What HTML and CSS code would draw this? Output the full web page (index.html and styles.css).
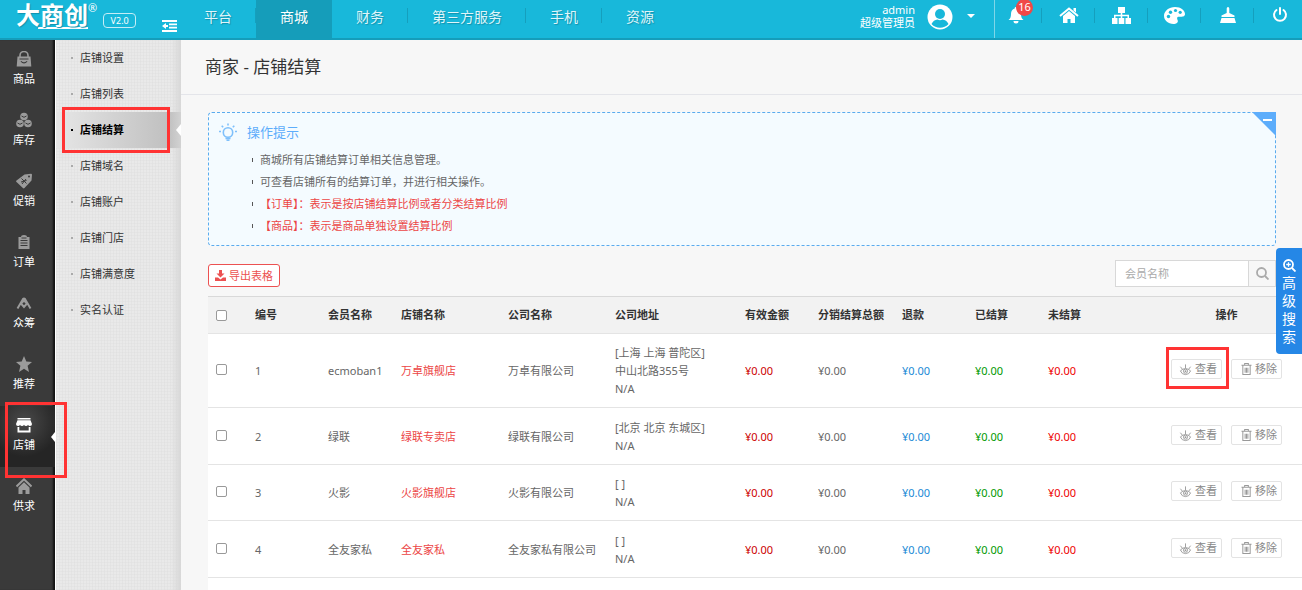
FILE: index.html
```html
<!DOCTYPE html>
<html lang="zh-CN">
<head>
<meta charset="utf-8">
<title>商家 - 店铺结算</title>
<link rel="stylesheet" href="styles.css">
</head>
<body>
<svg class="defs" aria-hidden="true">
  <symbol id="i-eye" viewBox="0 0 14 14"><g fill="none" stroke="currentColor"><path d="M1.500 8.500Q7 3.500 12.500 8.500Q11 12.500 7 12.500Q3 12.500 1.500 8.500Z"/><circle cx="7" cy="8.800" r="2.200"/><path d="M7 1.500V5.500M1.500 4L3.500 6.500M12.500 4L10.500 6.500"/></g><circle cx="7" cy="8.800" r="1" fill="currentColor"/></symbol>
  <symbol id="i-trash" viewBox="0 0 12 13"><path d="M4 2V.6h4V2M.5 2.500h11M2 3v9.400h8V3M4.500 5v5.500M6 5v5.500M7.500 5v5.500" fill="none" stroke="currentColor" stroke-width="1.100"/></symbol>
</svg>
<header class="top">
  <div class="brand">
    <span class="logo">大商创</span><span class="reg">®</span>
    <span class="ver">V2.0</span>
    <button class="fold" aria-label="折叠菜单"><svg width="15" height="12" viewBox="0 0 15 12" fill="#fff"><path d="M0 0h15v2H0zM7 3.500h8v1.800H7zM7 6.700h8v1.800H7zM0 10h15v2H0zM0 6l4-3v2h2v2H4v2z"/></svg></button>
  </div>
  <nav class="tabs">
    <a href="#">平台</a><a href="#" class="on">商城</a><a href="#">财务</a><a href="#">第三方服务</a><a href="#">手机</a><a href="#">资源</a>
  </nav>
  <div class="user">
    <div class="who"><span>admin</span><span>超级管理员</span></div>
    <svg width="26" height="26" viewBox="0 0 26 26"><circle cx="13" cy="13" r="12.500" fill="#fff"/><circle cx="13" cy="10" r="5" fill="#18b8da"/><path d="M4.500 20Q6.500 15.800 10.500 15.500Q13 17 15.500 15.500Q19.500 15.800 21.500 20Q18 23.800 13 23.800Q8 23.800 4.500 20Z" fill="#18b8da"/></svg>
    <svg class="caret" width="8" height="4" viewBox="0 0 8 4"><path d="M0 0h8L4 4z" fill="#fff"/></svg>
  </div>
  <div class="tools">
    <button aria-label="消息"><svg width="16" height="18" viewBox="0 0 16 18" fill="#fff"><path d="M8 1a1.300 1.300 0 0 1 1.300 1.500Q13 3.600 13 8q0 4.500 2.500 6H.5Q3 12.500 3 8q0-4.400 3.700-5.500A1.300 1.300 0 0 1 8 1zM5.500 15h5a2.500 2.500 0 0 1-5 0z"/></svg><span class="badge">16</span></button>
    <button aria-label="首页"><svg width="20" height="16" viewBox="0 0 20 16"><path d="M1 9l9-7.500L19 9" fill="none" stroke="#fff" stroke-width="2"/><path d="M14.500 1H17v4.500l-2.500-2zM4 9l6-5 6 5v7h-4.500v-4h-3v4H4z" fill="#fff"/></svg></button>
    <button aria-label="站点地图"><svg width="19" height="17" viewBox="0 0 19 17" fill="#fff"><path d="M6 0h7v6H6zM0 11h5.500v6H0zM6.700 11h5.600v6H6.700zM13.500 11H19v6h-5.500zM8.700 6h1.600v5H8.700zM2 7.700h15V11h-1.500V9.200h-12V11H2z"/></svg></button>
    <button aria-label="主题"><svg width="21" height="17" viewBox="0 0 21 17"><path d="M11 0c6 0 10 3.500 10 7 0 3-3.500 2.800-5.800 2.800-3 0-2 2.200-1.500 3.500C14.500 16 12 17 9.500 17 4 17 0 13.300 0 8.800 0 4 5 0 11 0z" fill="#fff"/><g fill="#18b8da"><circle cx="4.500" cy="9.500" r="1.700"/><circle cx="6.500" cy="5.300" r="1.700"/><circle cx="11.500" cy="3.500" r="1.600"/><circle cx="16.200" cy="5.300" r="1.600"/></g></svg></button>
    <button aria-label="清理缓存"><svg width="16" height="17" viewBox="0 0 16 17" fill="#fff"><path d="M8 0q1.300 0 1.300 1.500V6L14.500 8.500V10h-13V8.500L6.700 6V1.500Q6.700 0 8 0zM1.500 11h13L16 16H0z"/></svg></button>
    <button aria-label="退出"><svg width="16" height="16" viewBox="0 0 16 16" fill="none" stroke="#fff" stroke-width="2" stroke-linecap="round"><path d="M8 1v6M4.500 3a6 6 0 1 0 7 0"/></svg></button>
  </div>
</header>
<div class="frame">
  <nav class="side">
    <a href="#"><svg viewBox="0 0 16 16" fill="#9b9b9b"><path d="M4 6V4.500a4 4 0 0 1 8 0V6" fill="none" stroke="#9b9b9b" stroke-width="1.600"/><path fill-rule="evenodd" d="M1.500 5.500h13l.8 10H.7zM3.500 7.500v1h9v-1zM4.500 10.500q3.500 4 7 0l-.8-.5q-2.700 2.500-5.400 0z"/></svg><span>商品</span></a>
    <a href="#"><svg viewBox="0 0 16 16"><g fill="#9b9b9b"><circle cx="8" cy="4.500" r="3.800"/><circle cx="4" cy="11.500" r="3.800"/><circle cx="12" cy="11.500" r="3.800"/></g><g fill="none" stroke="#3a3a3a"><path d="M5.500 4L8 5.300 10.500 4M1.500 11L4 12.300l2.500-1.300M9.500 11l2.500 1.300 2.500-1.300"/></g></svg><span>库存</span></a>
    <a href="#"><svg viewBox="0 0 16 16"><path d="M8.500 1.500L15 .8q1 0 1 1L15.500 7.500 8.500 15q-.8.8-1.600 0L.5 9q-.8-.8 0-1.600z" fill="#9b9b9b"/><circle cx="13" cy="3.500" r="1" fill="#3a3a3a"/><path d="M5.500 5.500l5 5M10 6l-4 5M5 9l5.500-1.500" stroke="#3a3a3a"/></svg><span>促销</span></a>
    <a href="#"><svg viewBox="0 0 16 16"><path d="M2.500 3H5q0-2 3-2t3 2h2.500v12h-11z" fill="#9b9b9b"/><path d="M4.500 6.500h7M4.500 9h7M4.500 11.500h7M5.500 4h5" stroke="#3a3a3a"/></svg><span>订单</span></a>
    <a href="#"><svg viewBox="0 0 16 16"><path d="M1.500 13.500L7 4q1-1.200 2 0l5.500 9.500M5 8.500l3 3.500 3-3.500-3-3z" fill="none" stroke="#9b9b9b" stroke-width="2"/></svg><span>众筹</span></a>
    <a href="#"><svg viewBox="0 0 16 16"><path d="M8 0l2.300 5.600 5.700.4-4.400 3.800L13 16l-5-3.300L3 16l1.400-6.200L0 6l5.700-.4z" fill="#9b9b9b"/></svg><span>推荐</span></a>
    <a href="#" class="on"><svg viewBox="0 0 16 16" fill="#fff"><path d="M1.500 1h13v1.500h-13zM1.500 3.300h13L16 7q0 2-2 2-1.500 0-2-1.200Q11.500 9 10 9 8.600 9 8 7.800 7.400 9 6 9 4.500 9 4 7.800 3.500 9 2 9 0 9 0 7zM1.500 10h1.800v3.500h9.400V10h1.800v5.500h-13z"/></svg><span>店铺</span><i class="mark mark-side"></i></a>
    <a href="#"><svg viewBox="0 0 16 16"><path d="M.5 8.500L8 1.300l7.500 7.200" fill="none" stroke="#9b9b9b" stroke-width="2"/><path d="M2.500 9.500L8 4.200l5.500 5.300V16h-4v-4h-3v4h-4z" fill="#9b9b9b"/></svg><span>供求</span></a>
  </nav>
  <nav class="sub">
    <a href="#">店铺设置</a>
    <a href="#">店铺列表</a>
    <a href="#" class="on">店铺结算<i class="mark mark-sub"></i></a>
    <a href="#">店铺域名</a>
    <a href="#">店铺账户</a>
    <a href="#">店铺门店</a>
    <a href="#">店铺满意度</a>
    <a href="#">实名认证</a>
  </nav>
  <main class="main">
    <h1>商家 - 店铺结算</h1>
    <div class="content">
      <section class="tips">
        <h2><svg width="18" height="18" viewBox="0 0 18 18" fill="none" stroke="#7fc0fb" stroke-width="1.600"><circle cx="9" cy="9.500" r="4.700"/><path d="M6.500 15.500h5M7.500 17.300h3M9 .5v2M2.700 2.700l1.500 1.500M15.300 2.700l-1.500 1.500M0 8.500h2M16 8.500h2"/></svg>操作提示</h2>
        <ul>
          <li>商城所有店铺结算订单相关信息管理。</li>
          <li>可查看店铺所有的结算订单，并进行相关操作。</li>
          <li class="red">【订单】：表示是按店铺结算比例或者分类结算比例</li>
          <li class="red">【商品】：表示是商品单独设置结算比例</li>
        </ul>
        <button class="collapse" aria-label="收起"></button>
      </section>
      <div class="bar">
        <button class="export"><svg width="11" height="11" viewBox="0 0 11 11" fill="#ec5151"><path d="M4 0h3v3.500h2.500L5.500 7.500 1.500 3.500H4zM0 7.500h3L5.500 9.500 8 7.500h3V11H0z"/></svg>导出表格</button>
        <form class="search">
          <input type="text" placeholder="会员名称" aria-label="会员名称">
          <button type="button" aria-label="搜索"><svg width="13" height="13" viewBox="0 0 13 13" fill="none" stroke="#aaa" stroke-width="1.800"><circle cx="5.500" cy="5.500" r="4.500"/><path d="M9 9l3.500 3.500"/></svg></button>
        </form>
      </div>
      <div class="list">
        <table>
          <colgroup><col class="c-check"><col class="c-s"><col class="c-s"><col class="c-l"><col class="c-l"><col class="c-addr"><col class="c-s"><col class="c-m"><col class="c-s"><col class="c-s"><col class="c-l"><col></colgroup>
          <thead><tr><th><input type="checkbox" aria-label="全选"></th><th>编号</th><th>会员名称</th><th>店铺名称</th><th>公司名称</th><th>公司地址</th><th>有效金额</th><th>分销结算总额</th><th>退款</th><th>已结算</th><th>未结算</th><th class="ops">操作</th></tr></thead>
          <tbody>
            <tr><td class="pick"><input type="checkbox" aria-label="选择 1"></td><td>1</td><td>ecmoban1</td><td class="red">万卓旗舰店</td><td>万卓有限公司</td><td>[上海 上海 普陀区]<br>中山北路355号<br>N/A</td><td class="crimson">¥0.00</td><td>¥0.00</td><td class="blue">¥0.00</td><td class="green">¥0.00</td><td class="pure">¥0.00</td><td class="ops"><a href="#"><svg width="13" height="13"><use href="#i-eye"/></svg>查看<i class="mark mark-btn"></i></a><a href="#"><svg width="11" height="12"><use href="#i-trash"/></svg>移除</a></td></tr>
            <tr><td class="pick"><input type="checkbox" aria-label="选择 2"></td><td>2</td><td>绿联</td><td class="red">绿联专卖店</td><td>绿联有限公司</td><td>[北京 北京 东城区]<br>N/A</td><td class="crimson">¥0.00</td><td>¥0.00</td><td class="blue">¥0.00</td><td class="green">¥0.00</td><td class="pure">¥0.00</td><td class="ops"><a href="#"><svg width="13" height="13"><use href="#i-eye"/></svg>查看</a><a href="#"><svg width="11" height="12"><use href="#i-trash"/></svg>移除</a></td></tr>
            <tr><td class="pick"><input type="checkbox" aria-label="选择 3"></td><td>3</td><td>火影</td><td class="red">火影旗舰店</td><td>火影有限公司</td><td>[ ]<br>N/A</td><td class="crimson">¥0.00</td><td>¥0.00</td><td class="blue">¥0.00</td><td class="green">¥0.00</td><td class="pure">¥0.00</td><td class="ops"><a href="#"><svg width="13" height="13"><use href="#i-eye"/></svg>查看</a><a href="#"><svg width="11" height="12"><use href="#i-trash"/></svg>移除</a></td></tr>
            <tr><td class="pick"><input type="checkbox" aria-label="选择 4"></td><td>4</td><td>全友家私</td><td class="red">全友家私</td><td>全友家私有限公司</td><td>[ ]<br>N/A</td><td class="crimson">¥0.00</td><td>¥0.00</td><td class="blue">¥0.00</td><td class="green">¥0.00</td><td class="pure">¥0.00</td><td class="ops"><a href="#"><svg width="13" height="13"><use href="#i-eye"/></svg>查看</a><a href="#"><svg width="11" height="12"><use href="#i-trash"/></svg>移除</a></td></tr>
          </tbody>
        </table>
      </div>
    </div>
  </main>
</div>
<button class="advanced"><svg width="13" height="13" viewBox="0 0 13 13" fill="none" stroke="#fff" stroke-width="1.800"><circle cx="5.500" cy="5.500" r="4.500"/><path d="M9 9l3.500 3.500"/><path d="M3.200 5.500h4.600M5.500 3.200v4.600" stroke-width="1.300"/></svg><span>高</span><span>级</span><span>搜</span><span>索</span></button>
</body>
</html>
```

FILE: styles.css
```css
* { box-sizing: border-box; }
body {
  margin: 0;
  min-height: 100vh;
  display: flex;
  flex-direction: column;
  overflow-x: hidden;
  font: 11px/18px "Noto Sans", "Noto Sans CJK SC", sans-serif;
  color: #666;
  background: #f7f7f7;
}
a { color: inherit; text-decoration: none; }
button { margin: 0; padding: 0; border: 0; background: none; font: inherit; color: inherit; cursor: pointer; }
svg { display: block; flex: none; }
ul, h1, h2 { margin: 0; padding: 0; font-weight: 400; }
.defs { position: absolute; width: 0; height: 0; }

.top { height: 40px; display: flex; background: #18b8da; border-bottom: 2px solid #159dba; color: #fff; }
.brand { width: 180px; display: flex; align-items: flex-start; padding-left: 16px; }
.logo {
  font-size: 24px; line-height: 26px; font-weight: 700; height: 29px; padding-top: 2px;
  background: linear-gradient(#fff, #fff) right bottom / 50px 2px no-repeat;
  text-shadow: 1px 1px 1px #1292ad;
}
.reg { font-size: 11px; line-height: 16px; }
.ver { font-size: 9px; line-height: 13px; width: 33px; text-align: center; border: 1px solid #c5edf6; border-radius: 4px; margin: 13px 0 0 6px; }
.fold { margin: 20px 0 0 auto; padding-right: 3px; }
.tabs { display: flex; font-size: 14px; line-height: 34px; text-shadow: 1px 1px 1px #1292ad; }
.tabs a {
  padding: 0 24px; color: #dff5fa;
  background: linear-gradient(#159fbd, #159fbd) right 8px / 1px 15px no-repeat;
}
.tabs a:last-child { background: none; }
.tabs .on { background: #159dba; color: #fff; }
.user { margin-left: auto; display: flex; padding-right: 19px; border-right: 1px solid #7fd6e8; }
.who { display: flex; flex-direction: column; text-align: right; line-height: 13px; padding-top: 3px; margin-right: 12px; }
.user > svg { margin-top: 4px; }
.user .caret { margin: 14px 0 0 14px; }
.tools { display: grid; grid-template-columns: 47px repeat(4, 53px) 48px; }
.tools button {
  position: relative; display: flex; justify-content: center; align-items: center; height: 30px;
  background: linear-gradient(#159fbd, #159fbd) right 8px / 1px 15px no-repeat;
}
.tools button:first-child { padding-right: 5px; }
.tools button:last-child { padding-left: 4px; background: none; }
.badge { position: absolute; left: 21px; top: -1px; width: 17px; height: 17px; border-radius: 9px; background: #f04848; line-height: 16px; text-align: center; }

.frame { flex: 1; display: flex; }
.side { width: 56px; flex: none; background: #3a3a3a; border-right: 1px solid #fff; box-shadow: inset -3px 0 2px -1px #111; color: #fff; }
.side a { position: relative; height: 61px; display: flex; flex-direction: column; align-items: center; gap: 2px; padding: 11px 7px 0 0; }
.side svg { width: 16px; height: 16px; }
.side span { line-height: 20px; }
.side .on { background: radial-gradient(circle at 24px 16px, #4a4a4a, #252525 35px); }
.side .on::after { content: ""; position: absolute; right: 0; top: 26px; border: 5px solid transparent; border-left: 0; border-right: 4px solid #fff; }
.sub {
  width: 125px; flex: none; color: #333;
  background:
    linear-gradient(90deg, transparent 115px, #d8d8d8),
    repeating-linear-gradient(90deg, #dcdcdc66 0 1px, transparent 1px 3px),
    repeating-linear-gradient(#dedede66 0 1px, transparent 1px 3px), #e9e9e9;
}
.sub a { position: relative; display: flex; align-items: center; height: 36px; padding-left: 15px; }
.sub a::before { content: ""; width: 2px; height: 2px; background: #aaa; margin-right: 7px; }
.sub .on { color: #000; font-weight: 700; background: linear-gradient(90deg, #e6e6e6, #c0c0c0 90%, #d2d2d2); }
.sub .on::before { background: #000; }
.sub .on::after { content: ""; position: absolute; right: 0; top: 12px; border: 6px solid transparent; border-left: 0; border-right: 5px solid #fff; }
.mark { position: absolute; z-index: 3; border: 3px solid #f33; pointer-events: none; }
.mark-side { left: 5px; top: -4px; width: 62px; height: 76px; }
.mark-sub { left: 6px; top: -5px; width: 108px; height: 46px; }
.mark-btn { left: -6px; top: -13px; width: 63px; height: 42px; }

.main { flex: 1; min-width: 0; display: flex; flex-direction: column; }
h1 { font-size: 17px; line-height: 54px; color: #333; padding-left: 24px; border-bottom: 1px solid #e4e5ea; }
.content { flex: 1; display: flex; flex-direction: column; padding: 17px 26px 0 27px; }
.tips { position: relative; padding: 8px 10px; background: #f4fbff; border: 1px dashed #5aabee; border-radius: 4px; }
.tips h2 { display: flex; align-items: center; gap: 10px; font-size: 13px; line-height: 22px; color: #5dadfb; margin-bottom: 6px; }
.tips ul { list-style: none; padding-left: 33px; line-height: 22px; }
.tips li { display: flex; align-items: center; }
.tips li::before { content: ""; width: 1px; height: 4px; background: #555; margin-right: 7px; }
.collapse { position: absolute; right: -1px; top: -1px; width: 24px; height: 24px; background: linear-gradient(#fff, #fff) 11px 7px / 9px 2px no-repeat, #5dadfb; clip-path: polygon(0 0, 100% 0, 100% 100%); }
.red { color: #ec4545; }
.bar { display: flex; justify-content: space-between; align-items: flex-start; padding: 14px 0 9px; }
.export { display: flex; align-items: center; gap: 3px; height: 23px; margin-top: 4px; padding: 0 6px; border: 1px solid #ec5151; border-radius: 3px; background: #fff; color: #ec5151; }
.search { display: flex; height: 27px; border: 1px solid #d8d8d8; }
.search input { width: 133px; border: 0; border-right: 1px solid #d8d8d8; padding: 0 9px; font: inherit; background: #fff; }
.search input::placeholder { color: #aaa; opacity: 1; }
.search button { width: 26px; display: flex; align-items: center; justify-content: center; }
.list { flex: 1; margin-right: -26px; background: #fff; border-top: 1px solid #d9d9d9; }
table { width: 100%; table-layout: fixed; border-collapse: separate; border-spacing: 0; }
.c-check { width: 39px; }
.c-s { width: 73px; }
.c-m { width: 84px; }
.c-l { width: 107px; }
.c-addr { width: 130px; }
th { height: 37px; padding: 0 8px; text-align: left; color: #333; background: #f2f2f2; border-bottom: 1px solid #e4e4e4; white-space: nowrap; }
td { padding: 10px 8px 9px; border-bottom: 1px solid #e4e4e4; white-space: nowrap; }
td input, th input { display: block; width: 11px; height: 11px; margin: 0; appearance: none; border: 1px solid #999; border-radius: 2px; background: #fff; }
tbody tr:nth-child(even) td { padding-top: 11px; }
th.ops, td.ops { text-align: center; padding-left: 10px; padding-right: 6px; }
td.ops, td.pick { padding-bottom: 13px; }
.ops a { position: relative; display: inline-flex; align-items: center; justify-content: flex-end; gap: 3px; width: 51px; height: 20px; padding-right: 4px; border: 1px solid #e3e3e3; border-radius: 2px; color: #888; vertical-align: middle; }
.ops a + a { margin-left: 9px; }
.ops svg { color: #999; }
.crimson { color: #c00; }
.blue { color: #1a8ad6; }
.green { color: #090; }
.pure { color: #e00; }
.advanced { position: absolute; right: 0; top: 248px; width: 26px; height: 106px; display: flex; flex-direction: column; align-items: center; padding-top: 11px; border-radius: 4px 0 0 4px; background: #2587e6; color: #fff; font-size: 14px; line-height: 18px; }
.advanced svg { margin-bottom: 2px; }
```
